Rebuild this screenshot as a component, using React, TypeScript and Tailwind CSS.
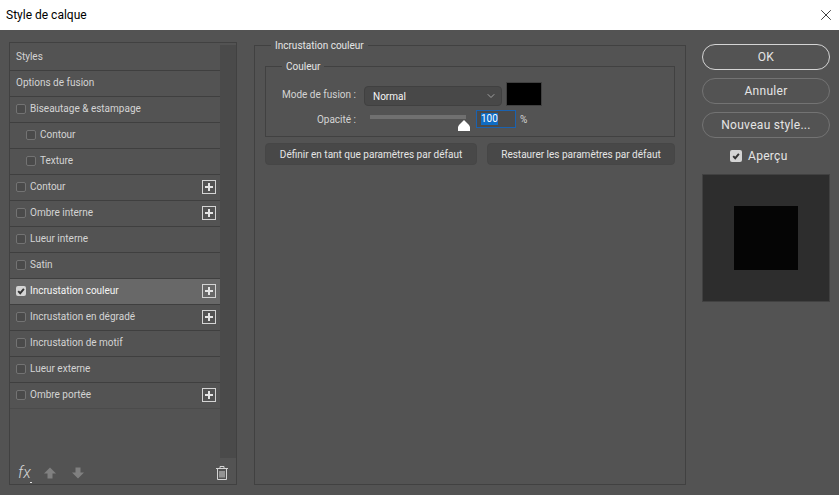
import { X, ChevronDown } from "lucide-react";

interface LayerStyle {
  label: string;
  checkbox?: boolean;
  indent?: boolean;
  plus?: boolean;
  active?: boolean;
}

const styles: LayerStyle[] = [
  { label: "Styles" },
  { label: "Options de fusion" },
  { label: "Biseautage & estampage", checkbox: true },
  { label: "Contour", checkbox: true, indent: true },
  { label: "Texture", checkbox: true, indent: true },
  { label: "Contour", checkbox: true, plus: true },
  { label: "Ombre interne", checkbox: true, plus: true },
  { label: "Lueur interne", checkbox: true },
  { label: "Satin", checkbox: true },
  { label: "Incrustation couleur", checkbox: true, plus: true, active: true },
  { label: "Incrustation en dégradé", checkbox: true, plus: true },
  { label: "Incrustation de motif", checkbox: true },
  { label: "Lueur externe", checkbox: true },
  { label: "Ombre portée", checkbox: true, plus: true },
];

function CheckBox({ checked, large }: { checked?: boolean; large?: boolean }) {
  const size = large ? "h-3 w-3" : "h-2.5 w-2.5";
  if (checked) {
    return (
      <span className={`flex shrink-0 items-center justify-center rounded-xs bg-neutral-300 ${size}`}>
        <svg width="8" height="8" viewBox="0 0 10 10" fill="none" stroke="#333" strokeWidth="2.4">
          <path d="M1.5 5.2 4 7.8 8.6 2.4" />
        </svg>
      </span>
    );
  }
  return <span className={`shrink-0 rounded-xs border border-neutral-500 bg-[#4a4a4a] ${size}`} />;
}

function PlusBox() {
  return (
    <span className="flex h-3.5 w-3.5 shrink-0 items-center justify-center border border-neutral-300">
      <svg width="8" height="8" viewBox="0 0 8 8" fill="none" stroke="#e5e5e5" strokeWidth="2">
        <path d="M4 0v8M0 4h8" />
      </svg>
    </span>
  );
}

function RoundButton({ label, strong }: { label: string; strong?: boolean }) {
  return (
    <button
      className={`h-6.5 w-full rounded-full border text-center text-xs tracking-wide text-neutral-200 ${
        strong ? "border-neutral-300" : "border-neutral-500"
      }`}
    >
      {label}
    </button>
  );
}

export default function App() {
  return (
    <div className="flex h-screen w-full flex-col overflow-hidden bg-[#535353] font-['Roboto',sans-serif] text-[10px] text-neutral-300">
      {/* Title bar */}
      <div className="flex h-7.5 shrink-0 items-center justify-between bg-white pl-1.5 pr-1 text-xs text-black">
        <span>Style de calque</span>
        <X size={18} strokeWidth={1} />
      </div>

      <div className="flex min-h-0 flex-1 gap-4 pb-2.5 pl-2 pt-3">
        {/* Style list */}
        <div className="mx-px flex w-[228px] shrink-0 flex-col border border-[#414141]">
          <div className="flex min-h-0 flex-1 pt-0.5">
            <div className="flex-1">
              {styles.map((item, i) => (
                <div
                  key={i}
                  className={`flex h-6.5 items-center gap-1 border-b pb-0.5 pr-1 ${
                    i === styles.length - 1 ? "border-[#4b4b4b]" : "border-[#3f3f3f]"
                  } ${item.indent ? "pl-4" : "pl-1.5"} ${item.active ? "bg-[#686868] text-neutral-100" : ""}`}
                >
                  {item.checkbox && <CheckBox checked={item.active} />}
                  <span className="flex-1">{item.label}</span>
                  {item.plus && <PlusBox />}
                </div>
              ))}
            </div>
            <div className="w-4 bg-[#4a4a4a]" />
          </div>
          <div className="flex h-6.5 shrink-0 items-center pl-2 pr-2 pt-1 text-neutral-400">
            <span className="relative w-6.5 text-base font-light italic leading-none text-neutral-300">
              fx
              <span className="absolute -bottom-0.5 left-3 h-px w-0.5 bg-neutral-200" />
            </span>
            <svg width="12" height="12" viewBox="0 0 12 12" fill="#808080" className="mr-4">
              <path d="M6 0.5 12 6.5H8.5V11.5H3.5V6.5H0Z" />
            </svg>
            <svg width="12" height="12" viewBox="0 0 12 12" fill="#808080">
              <path d="M6 11.5 12 5.5H8.5V0.5H3.5V5.5H0Z" />
            </svg>
            <svg width="12" height="14" viewBox="0 0 12 14" fill="none" stroke="#d4d4d4" className="ml-auto">
              <path d="M0 2.5H12M4 2.5V.5H8V2.5M1.5 2.5V13.5H10.5V2.5M4 5V11.5M6 5V11.5M8 5V11.5" />
            </svg>
          </div>
        </div>

        {/* Settings */}
        <fieldset className="-mt-1 w-[432px] shrink-0 border border-[#414141] px-2.5 pb-2">
          <legend className="ml-1.5 px-1 text-neutral-200">Incrustation couleur</legend>
          <fieldset className="mt-1.5 border border-[#414141] pb-2 pt-2">
            <legend className="ml-4 px-1 text-neutral-200">Couleur</legend>
            <div className="flex items-end">
              <span className="w-23 self-center pr-0.5 text-right">Mode de fusion :</span>
              <div className="ml-1.5 flex h-5 w-[138px] items-center justify-between rounded-sm border border-[#404040] bg-[#484848] pl-2 pr-1 text-neutral-100">
                Normal
                <ChevronDown size={12} className="text-neutral-400" />
              </div>
              <div className="ml-1 h-6 w-9 border border-[#404040] bg-black" />
            </div>
            <div className="mt-1 flex items-center">
              <span className="w-23 pr-0.5 text-right">Opacité :</span>
              <div className="relative ml-3 h-4 w-25">
                <div className="mt-1 h-1 w-24 bg-[#707070]" />
                <svg width="12" height="11" viewBox="0 0 12 11" fill="white" className="absolute -bottom-1 right-0">
                  <path d="M6 0 11 5 12 7V11H0V7L1 5Z" />
                </svg>
              </div>
              <div className="ml-1.5 flex h-4.5 w-10 items-center border border-[#1a62b0] bg-[#4a4a4a] pl-1">
                <span className="bg-[#0f6cc4] leading-3 text-white">100</span>
              </div>
              <span className="ml-1">%</span>
            </div>
          </fieldset>
          <div className="mt-1.5 flex gap-2.5">
            <button className="h-5.5 flex-1 rounded-sm border border-[#464646] bg-[#484848] text-neutral-200">
              Définir en tant que paramètres par défaut
            </button>
            <button className="h-5.5 w-47 rounded-sm border border-[#464646] bg-[#484848] text-neutral-200">
              Restaurer les paramètres par défaut
            </button>
          </div>
        </fieldset>

        {/* Actions */}
        <div className="flex w-32 shrink-0 flex-col gap-2 pt-0.5">
          <RoundButton label="OK" strong />
          <RoundButton label="Annuler" />
          <RoundButton label="Nouveau style..." />
          <div className="mt-0.5 flex items-center gap-1.5 pl-7 text-xs tracking-wide text-neutral-200">
            <CheckBox checked large />
            Aperçu
          </div>
          <div className="mt-0.5 flex h-32 w-32 items-center justify-center border border-[#414141] bg-[#2d2d2d]">
            <div className="h-16 w-16 bg-[#050505]" />
          </div>
        </div>
      </div>
    </div>
  );
}
